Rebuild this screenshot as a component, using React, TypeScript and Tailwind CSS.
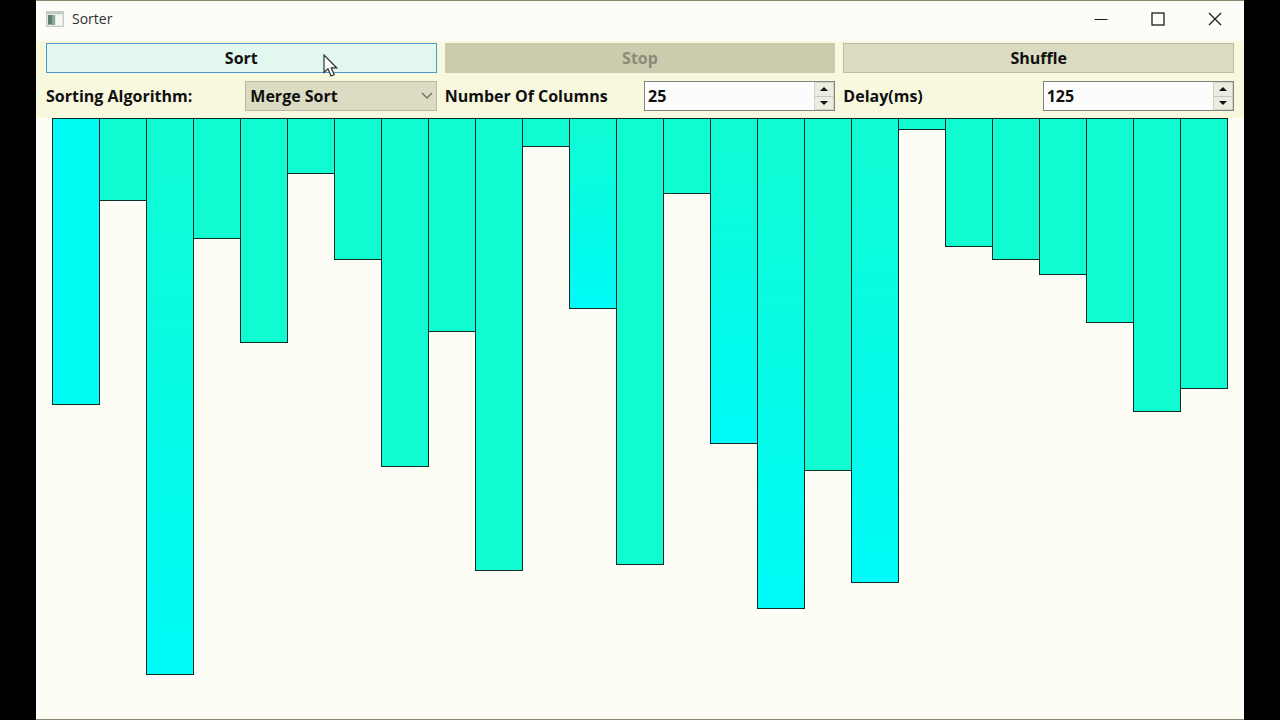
import { useState } from "react";

const cool = "bg-[#00fbf4]";
const mint = "bg-[#10fbd2]";
const fade = "bg-linear-to-b from-[#10fbd2] to-[#00fbf8]";

const columns = [
  { height: 287, tone: cool },
  { height: 83, tone: mint },
  { height: 557, tone: fade },
  { height: 121, tone: mint },
  { height: 225, tone: mint },
  { height: 56, tone: mint },
  { height: 142, tone: mint },
  { height: 349, tone: mint },
  { height: 214, tone: mint },
  { height: 453, tone: mint },
  { height: 29, tone: mint },
  { height: 191, tone: fade },
  { height: 447, tone: mint },
  { height: 76, tone: mint },
  { height: 326, tone: fade },
  { height: 491, tone: fade },
  { height: 353, tone: mint },
  { height: 465, tone: fade },
  { height: 12, tone: mint },
  { height: 129, tone: mint },
  { height: 142, tone: mint },
  { height: 157, tone: mint },
  { height: 205, tone: mint },
  { height: 294, tone: mint },
  { height: 271, tone: mint },
];

function TitleBar() {
  return (
    <header className="flex h-10 items-center justify-between bg-[#fcfcf8] pr-[13px] pb-1 pl-2.5">
      <div className="flex items-center gap-2">
        <svg width="18" height="16" viewBox="0 0 18 16" aria-hidden="true">
          <rect x="0.5" y="0.5" width="17" height="15" fill="#e4e6de" stroke="#c9cbc6" />
          <rect x="1" y="1" width="16" height="2" fill="#c4c9cc" />
          <rect x="2" y="4" width="7" height="10" fill="#86ac96" />
          <rect x="2" y="4" width="4" height="9" fill="#5c8074" />
          <rect x="10" y="4" width="6" height="10" fill="#f7f8f2" />
        </svg>
        <h1 className="text-sm text-[#303030]">Sorter</h1>
      </div>
      <div className="flex items-center gap-[25px] text-[#1c1c1c]">
        <button type="button" aria-label="Minimize" className="flex size-8 items-center justify-center">
          <svg width="14" height="14" viewBox="0 0 14 14" stroke="currentColor">
            <path d="M0.5 7.5h13" />
          </svg>
        </button>
        <button type="button" aria-label="Maximize" className="flex size-8 items-center justify-center">
          <svg width="14" height="14" viewBox="0 0 14 14" fill="none" stroke="currentColor" strokeWidth="1.3">
            <rect x="1" y="1" width="12" height="12" />
          </svg>
        </button>
        <button type="button" aria-label="Close" className="flex size-8 items-center justify-center">
          <svg width="14" height="14" viewBox="0 0 14 14" fill="none" stroke="currentColor" strokeWidth="1.3">
            <path d="M1 1l12 12M13 1L1 13" />
          </svg>
        </button>
      </div>
    </header>
  );
}

type SpinBoxProps = { id: string; label: string; initial: number; step: number };

function SpinBox({ id, label, initial, step }: SpinBoxProps) {
  const [value, setValue] = useState(initial);
  return (
    <div className="grid grid-cols-2 items-center gap-2">
      <label htmlFor={id} className="whitespace-nowrap">
        {label}
      </label>
      <div className="flex h-[30px] border border-[#84847e] bg-[#fcfcfc]">
        <input
          id={id}
          inputMode="numeric"
          value={value}
          onChange={(e) => setValue(Number(e.target.value) || 0)}
          className="min-w-0 flex-1 bg-transparent pl-[3px] outline-none"
        />
        <div className="flex w-5 flex-col border border-[#d4d4c4] bg-[#ecece0]">
          <button
            type="button"
            aria-label={`Increase ${label}`}
            onClick={() => setValue(value + step)}
            className="flex flex-1 items-center justify-center border-b border-[#c8c8bc]"
          >
            <svg width="8" height="4" viewBox="0 0 8 4">
              <path d="M0 4L4 0L8 4Z" fill="#101010" />
            </svg>
          </button>
          <button
            type="button"
            aria-label={`Decrease ${label}`}
            onClick={() => setValue(value - step)}
            className="flex flex-1 items-center justify-center"
          >
            <svg width="8" height="4" viewBox="0 0 8 4">
              <path d="M0 0L4 4L8 0Z" fill="#101010" />
            </svg>
          </button>
        </div>
      </div>
    </div>
  );
}

function Controls() {
  return (
    <section className="grid grid-cols-3 gap-2 bg-[#f8f8de] px-2.5 pt-[2px] pb-[7px] text-base/6 font-bold text-[#101010]">
      <button type="button" className="relative h-[30px] border border-[#4a9ac8] bg-[#e2f8ee]">
        Sort
        <svg
          width="15"
          height="24"
          viewBox="0 0 15 24"
          aria-hidden="true"
          className="absolute top-2.5 left-[276px]"
        >
          <path
            d="M1 1V18.500L5 14.800L8 22L11.200 20.700L8.200 13.800H13.600Z"
            fill="#fcfcfc"
            stroke="#303038"
            strokeWidth="1.2"
          />
        </svg>
      </button>
      <button type="button" disabled className="h-[30px] bg-[#cbcbae] text-[#8b8b76]">
        Stop
      </button>
      <button type="button" className="h-[30px] border border-[#bdbda8] bg-[#dcdcc2]">
        Shuffle
      </button>

      <div className="grid grid-cols-2 items-center gap-2">
        <label htmlFor="algorithm" className="whitespace-nowrap">
          Sorting Algorithm:
        </label>
        <div className="relative">
          <select
            id="algorithm"
            className="block h-[30px] w-full appearance-none border border-[#b8b8a4] bg-[#dcdcc2] pl-1 outline-none"
          >
            <option>Merge Sort</option>
          </select>
          <svg
            width="12"
            height="8"
            viewBox="0 0 12 8"
            fill="none"
            stroke="#74746a"
            strokeWidth="1.5"
            aria-hidden="true"
            className="pointer-events-none absolute top-[11px] right-1"
          >
            <path d="M1 1L6 6L11 1" />
          </svg>
        </div>
      </div>
      <SpinBox id="columns" label="Number Of Columns" initial={25} step={1} />
      <SpinBox id="delay" label="Delay(ms)" initial={125} step={5} />
    </section>
  );
}

export default function App() {
  return (
    <div className="min-h-screen bg-black px-9 font-['Open_Sans','Noto_Sans',sans-serif]">
      <div className="flex min-h-screen flex-col border-y border-[#8a8a70] bg-[#fdfdf6]">
        <TitleBar />
        <Controls />
        <main className="flex flex-1 items-start px-4">
          {columns.map((column, index) => (
            <div
              key={index}
              className={`-ml-px flex-1 border border-[#0c2c28] first:ml-0 ${column.tone}`}
              style={{ height: column.height }}
            />
          ))}
        </main>
      </div>
    </div>
  );
}
